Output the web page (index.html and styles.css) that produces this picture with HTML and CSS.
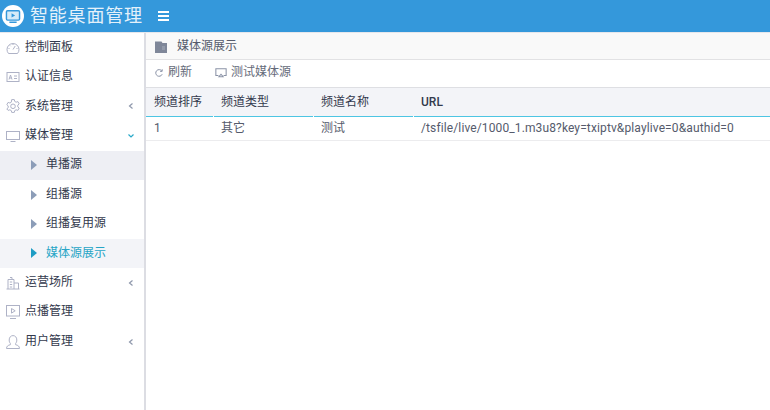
FILE: index.html
```html
<!DOCTYPE html>
<html lang="zh-CN">
  <head>
    <meta charset="UTF-8" />
    <title>智能桌面管理</title>
    <link rel="stylesheet" href="styles.css">
  </head>
  <body>
    <header class="topbar">
      <div class="logo">
        <span class="logo-badge">
          <svg width="22" height="20" viewBox="0 0 22 20" fill="none">
            <rect x="2" y="2" width="18" height="13" rx="1.5" stroke="#3498db" stroke-width="2" fill="#d6ebf8"/>
            <path d="M9 5.5l5 3-5 3z" fill="#3498db"/>
            <path d="M6 18h10" stroke="#3498db" stroke-width="2"/>
          </svg>
        </span>
        <span class="logo-text">智能桌面管理</span>
      </div>
      <span class="burger"><i></i><i></i><i></i></span>
    </header>
    <div class="layout">
      <nav class="sidebar">
        <a class="item">
          <svg class="ico" viewBox="0 0 14 14"><path d="M2.500 12.500A6 6 0 1 1 11.500 12.500z"/><path d="M7 8.500l2.200-3.500M2.500 7.500h1M10.500 7.500h1M7 3v1M4 4.500l.7.7"/></svg>
          <span>控制面板</span>
        </a>
        <a class="item">
          <svg class="ico" viewBox="0 0 14 14"><rect x="1" y="2.500" width="12" height="9"/><path d="M3 9.500l1.500-4.500L6 9.500M3.600 8h1.800M8 6h3M8 8.500h3"/></svg>
          <span>认证信息</span>
        </a>
        <a class="item">
          <svg class="ico" viewBox="0 0 14 14"><path d="M5.700 .6h2.600l.4 1.800 1.400.8 1.800-.6 1.300 2.300-1.400 1.200v1.800l1.400 1.200-1.300 2.300-1.800-.6-1.400.8-.4 1.800H5.700l-.4-1.800-1.400-.8-1.800.6L.8 9.900l1.400-1.200V6.900L.8 5.700l1.300-2.300 1.800.6 1.400-.8z"/><circle cx="7" cy="7.300" r="2.300"/></svg>
          <span>系统管理</span>
          <svg class="arrow" viewBox="0 0 8 8"><path d="M5.500 1.500L2.500 4l3 2.500"/></svg>
        </a>
        <a class="item">
          <svg class="ico" viewBox="0 0 14 14"><rect x=".5" y="2.500" width="13" height="8"/><path d="M4.500 12.500h5"/></svg>
          <span>媒体管理</span>
          <svg class="arrow arrow-open" viewBox="0 0 8 8"><path d="M1.500 2.500L4 5l2.500-2.500"/></svg>
        </a>
        <a class="subitem subitem-hover"><b class="tri"></b><span>单播源</span></a>
        <a class="subitem"><b class="tri"></b><span>组播源</span></a>
        <a class="subitem"><b class="tri"></b><span>组播复用源</span></a>
        <a class="subitem subitem-active"><b class="tri"></b><span>媒体源展示</span></a>
        <a class="item">
          <svg class="ico" viewBox="0 0 14 14"><path d="M2 13V3.500h6V13M8 7h4.500v6M.5 13h13M4 1.500h2v2M3.800 6h2.400M3.800 8.500h2.400M3.800 11h2.400"/></svg>
          <span>运营场所</span>
          <svg class="arrow" viewBox="0 0 8 8"><path d="M5.500 1.500L2.500 4l3 2.500"/></svg>
        </a>
        <a class="item">
          <svg class="ico" viewBox="0 0 14 14"><rect x=".5" y=".5" width="13" height="10.500"/><path d="M5.500 3.500L9.200 5.800l-3.700 2.300zM4 13.500h6"/></svg>
          <span>点播管理</span>
        </a>
        <a class="item">
          <svg class="ico" viewBox="0 0 14 14"><path d="M.5 13.500c0-2.200 1.500-3.300 3.900-3.800V8.500C3.500 7.500 3.200 6.300 3.200 5 3.200 2.300 4.800.6 7 .6s3.800 1.700 3.800 4.400c0 1.300-.3 2.500-1.200 3.500v1.200c2.400.5 3.900 1.600 3.900 3.800z"/></svg>
          <span>用户管理</span>
          <svg class="arrow" viewBox="0 0 8 8"><path d="M5.500 1.500L2.500 4l3 2.500"/></svg>
        </a>
      </nav>
      <main class="content">
        <div class="crumb">
          <svg class="crumb-ico" viewBox="0 0 12 12"><path d="M0 .5h6.500l1 1.500H12v10H0z" fill="#7f8799"/><path d="M7 6h3M7 8h3" stroke="#a8aebb"/></svg>
          <span>媒体源展示</span>
        </div>
        <div class="toolbar">
          <a class="tool">
            <svg class="tool-ico" viewBox="0 0 12 12"><path d="M9.800 7.500A4 4 0 1 1 9.300 3.500M9.800 1.500v2.500H7.300"/></svg>
            <span>刷新</span>
          </a>
          <a class="tool">
            <svg class="tool-ico tool-ico-wide" viewBox="0 0 14 12"><path d="M4 9.500H1V1.500h12v8h-3"/><path d="M4.500 11L7 8l2.500 3z"/></svg>
            <span>测试媒体源</span>
          </a>
        </div>
        <table class="grid">
          <thead>
            <tr>
              <th class="col-order">频道排序</th>
              <th class="col-type">频道类型</th>
              <th class="col-name">频道名称</th>
              <th class="col-url">URL</th>
            </tr>
          </thead>
          <tbody>
            <tr>
              <td>1</td>
              <td>其它</td>
              <td>测试</td>
              <td class="url">/tsfile/live/1000_1.m3u8?key=txiptv&amp;playlive=0&amp;authid=0</td>
            </tr>
          </tbody>
        </table>
      </main>
    </div>
  </body>
</html>
```

FILE: styles.css
```css
html {
  box-sizing: border-box;
  font-family: Roboto, "Noto Sans CJK SC", sans-serif;
  color: #4a5064;
  font-size: 12px;
  line-height: 1.15;
}
body {
  margin: 0;
  height: 410px;
  overflow: hidden;
  background: #fff;
  display: flex;
  flex-direction: column;
}
.topbar {
  height: 32px;
  flex: none;
  background: #3498db;
  display: flex;
  align-items: center;
}
.logo {
  display: flex;
  align-items: center;
}
.logo-badge {
  width: 22px;
  height: 22px;
  margin-left: 2px;
  border-radius: 50%;
  background: #fff;
  display: flex;
  align-items: center;
  justify-content: center;
  overflow: hidden;
}
.logo-badge svg {
  width: 16px;
  height: 15px;
}
.logo-text {
  margin-left: 6px;
  color: #e4f1fa;
  font-size: 18px;
  letter-spacing: 0.8px;
  white-space: nowrap;
}
.burger {
  margin-left: 15px;
  width: 11px;
  display: flex;
  flex-direction: column;
  gap: 2px;
}
.burger i {
  display: block;
  height: 2px;
  background: #fff;
}
.layout {
  flex: 1;
  display: flex;
  min-height: 0;
  border-top: 1px solid #e6e7ec;
}
.sidebar {
  width: 144px;
  flex: none;
  border-right: 2px solid #dcdde3;
}
.item,
.subitem {
  height: 29.4px;
  display: flex;
  align-items: center;
  color: #333a4d;
}
.ico {
  width: 14px;
  height: 14px;
  margin: 0 5px 0 6px;
  flex: none;
  fill: none;
  stroke: #aeb2c6;
  stroke-width: 1;
}
.arrow {
  width: 8px;
  height: 8px;
  margin-left: auto;
  margin-right: 9px;
  fill: none;
  stroke: #8e97ab;
  stroke-width: 1.200;
}
.arrow-open {
  stroke: #29a9c9;
}
.subitem {
  padding-left: 31px;
}
.subitem span {
  margin-left: 9px;
}
.tri {
  width: 0;
  height: 0;
  border-left: 6px solid #8c9db8;
  border-top: 5px solid transparent;
  border-bottom: 5px solid transparent;
}
.subitem-hover {
  background: #eeeff4;
}
.subitem-active {
  background: #f3f4f8;
  color: #27a5c6;
}
.subitem-active .tri {
  border-left-color: #1e9cc4;
}
.content {
  flex: 1;
  min-width: 0;
}
.crumb {
  height: 25px;
  padding: 1px 0 0 9px;
  background: #f9f9f9;
  border-bottom: 1px solid #e2e2e4;
  display: flex;
  align-items: center;
  color: #555b6c;
}
.crumb-ico {
  width: 12px;
  height: 12px;
  margin-right: 10px;
}
.toolbar {
  height: 26px;
  padding: 0 0 1px 8px;
  border-bottom: 1px solid #dedfe3;
  display: flex;
  align-items: center;
  gap: 23px;
}
.tool {
  display: flex;
  align-items: center;
  color: #666b7a;
}
.tool-ico {
  width: 10px;
  height: 10px;
  margin-right: 4px;
  fill: none;
  stroke: #8a92a6;
  stroke-width: 1.200;
}
.tool-ico-wide {
  width: 12px;
  height: 11px;
}
.grid {
  width: 100%;
  border-collapse: separate;
  border-spacing: 0;
  table-layout: fixed;
}
.grid th,
.grid td {
  padding: 1px 0 0 8px;
  text-align: left;
  white-space: nowrap;
}
.grid th {
  height: 27px;
  background: #f3f4f8;
  border-bottom: 1px solid #4dc5e3;
  font-weight: 400;
  color: #333a4d;
  position: relative;
}
.grid th + th::before {
  content: "";
  position: absolute;
  left: 0;
  bottom: -1px;
  width: 1px;
  height: 1px;
  background: #fff;
}
.grid td {
  height: 22px;
  border-bottom: 1px solid #ececee;
  color: #555b6c;
}
.col-order {
  width: 59px;
}
.col-type,
.col-name {
  width: 92px;
}
.grid .col-url {
  font-weight: 500;
}
.url {
  letter-spacing: 0.12px;
}
```
